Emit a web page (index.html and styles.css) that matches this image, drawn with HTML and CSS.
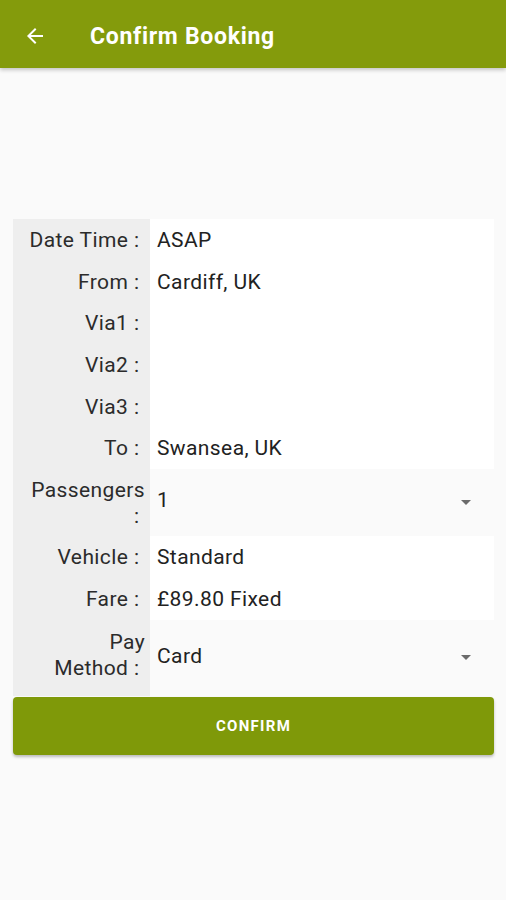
FILE: index.html
```html
<!DOCTYPE html>
<html>
<head>
<meta charset="utf-8">
<link rel="stylesheet" href="styles.css">
</head>
<body>
<header class="appbar">
  <svg class="back" width="24" height="24" viewBox="0 0 24 24"><path d="M20 11H7.83l5.59-5.59L12 4l-8 8 8 8 1.41-1.41L7.83 13H20v-2z" fill="#fff"/></svg>
  <h1 class="title">Confirm Booking</h1>
</header>
<main class="content">
  <div class="table">
    <div class="row">
      <div class="label">Date Time :&nbsp;</div>
      <div class="value white">ASAP</div>
    </div>
    <div class="row">
      <div class="label">From :&nbsp;</div>
      <div class="value white">Cardiff, UK</div>
    </div>
    <div class="row">
      <div class="label">Via1 :&nbsp;</div>
      <div class="value white"></div>
    </div>
    <div class="row">
      <div class="label">Via2 :&nbsp;</div>
      <div class="value white"></div>
    </div>
    <div class="row">
      <div class="label">Via3 :&nbsp;</div>
      <div class="value white"></div>
    </div>
    <div class="row">
      <div class="label">To :&nbsp;</div>
      <div class="value white">Swansea, UK</div>
    </div>
    <div class="row spin passengers">
      <div class="label two">Passengers<br>:&nbsp;</div>
      <div class="value select"><span class="sel-text">1</span><span class="caret"></span></div>
    </div>
    <div class="row">
      <div class="label">Vehicle :&nbsp;</div>
      <div class="value white">Standard</div>
    </div>
    <div class="row">
      <div class="label">Fare :&nbsp;</div>
      <div class="value white">£89.80 Fixed</div>
    </div>
    <div class="row spin pay">
      <div class="label two">Pay<br>Method :&nbsp;</div>
      <div class="value select"><span class="sel-text">Card</span><span class="caret"></span></div>
    </div>
  </div>
  <button class="confirm">CONFIRM</button>
</main>
</body>
</html>
```
FILE: styles.css
```css
* { box-sizing: border-box; }
html, body { margin: 0; padding: 0; }
body {
  background: #fafafa;
  font-family: Roboto, "Liberation Sans", sans-serif;
  width: 506px;
  height: 900px;
  overflow: hidden;
}
.appbar {
  height: 68px;
  background: #849b0c;
  display: flex;
  align-items: center;
  padding-left: 23px;
  padding-top: 4px;
  box-shadow: 0 2px 4px rgba(0,0,0,0.22);
  position: relative;
  z-index: 1;
}
.back { display: block; }
.title {
  margin: 0 0 0 43px;
  color: #fff;
  font-size: 23px;
  font-weight: 700;
  letter-spacing: 0.7px;
}
.content {
  padding: 151px 12px 0 13px;
}
.table {
  display: flex;
  flex-direction: column;
}
.row {
  display: flex;
  height: 41.7px;
}
.label {
  width: 137px;
  flex: none;
  background: #eeeeee;
  text-align: right;
  padding-right: 5px;
  font-size: 21px;
  letter-spacing: 0.4px;
  color: #2b2b2b;
  display: flex;
  align-items: center;
  justify-content: flex-end;
  white-space: nowrap;
}
.label.two {
  line-height: 26px;
}
.value {
  flex: 1;
  font-size: 21px;
  letter-spacing: 0.4px;
  color: #222;
  padding-left: 7px;
  display: flex;
  align-items: center;
}
.white { background: #fff; }
.passengers { height: 67px; }
.pay { height: 76px; }
.pay .label { padding-bottom: 5px; }
.pay .sel-text { margin-top: -4px; }
.select {
  justify-content: space-between;
  padding-right: 23px;
}
.passengers .sel-text { margin-top: -5px; }
.caret {
  width: 0;
  height: 0;
  border-left: 5px solid transparent;
  border-right: 5px solid transparent;
  border-top: 5px solid #6b6b6b;
}
.confirm {
  display: block;
  width: 481px;
  height: 58px;
  margin-top: 1px;
  border: none;
  border-radius: 4px;
  background: #7f9909;
  color: #fff;
  font-family: Roboto, "Liberation Sans", sans-serif;
  font-size: 15px;
  font-weight: 700;
  letter-spacing: 1.3px;
  padding-top: 2px;
  box-shadow: 0 2px 3px rgba(0,0,0,0.25);
}
```
